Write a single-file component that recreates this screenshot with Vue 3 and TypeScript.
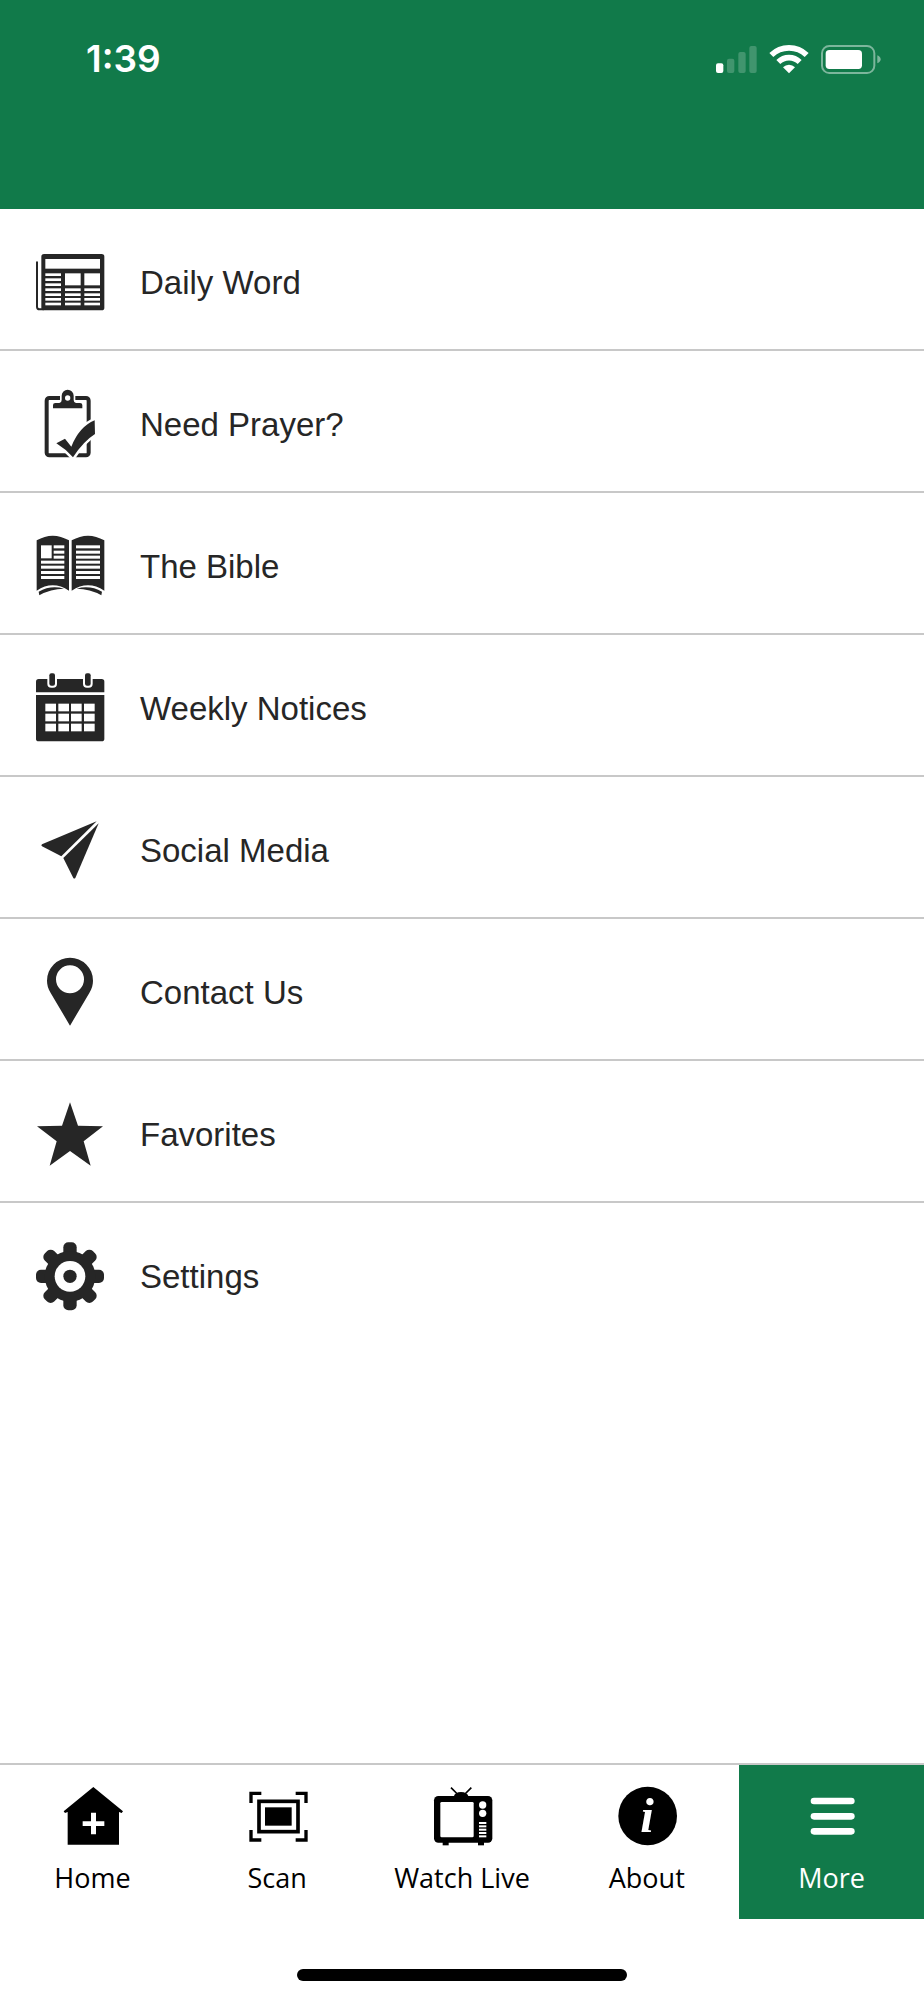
<script setup lang="ts">
import { ref } from 'vue'

interface Entry {
  id: string
  label: string
  viewBox: string
  art: string
}

const rects = (xs: number[], ys: number[], w: number, h: number): string =>
  ys.map((y) => xs.map((x) => `<rect x="${x}" y="${y}" width="${w}" height="${h}"/>`).join('')).join('')

const gearTeeth = [0, 45, 90, 135]
  .map((a) => `<rect x="130" y="487" width="40" height="204" rx="15" transform="rotate(${a} 150 589)"/>`)
  .join('')

const menu: Entry[] = [
  {
    id: 'daily-word',
    label: 'Daily Word',
    viewBox: '48 51 204 204',
    art: `<path d="M51 94V227Q51 235 59 235H70" fill="none" stroke="currentColor" stroke-width="6" stroke-linecap="round"/>
      <rect x="64" y="69" width="189" height="169" rx="8"/>
      <g fill="#fff"><rect x="76" y="84" width="164" height="29"/>
      ${rects([76], [127, 142, 157], 47, 8)}${rects([135, 193], [127], 47, 36)}
      ${rects([76, 135, 193], [172, 187, 201, 215], 47, 8)}</g>`,
  },
  {
    id: 'need-prayer',
    label: 'Need Prayer?',
    viewBox: '48 58 204 204',
    art: `<rect x="80" y="82" width="126" height="172" rx="8" fill="none" stroke="currentColor" stroke-width="12"/>
      <path d="M99 113V103Q99 97 106 97H118Q125 96 125 88V75A18 18 0 0 1 161 75V88Q161 96 168 97H180Q187 97 187 103V113Z" stroke="#fff" stroke-width="10" paint-order="stroke"/>
      <circle cx="143" cy="82" r="8" fill="#fff"/>
      <path d="M109 218L135 204L154 228Q178 168 224 149L225 190Q190 212 159 260Q137 235 109 218Z" stroke="#fff" stroke-width="15" paint-order="stroke"/>`,
  },
  {
    id: 'bible',
    label: 'The Bible',
    viewBox: '48 49 204 204',
    art: `<path d="M50 74Q98 46 147 74V225Q98 193 50 225Z"/><path d="M155 74Q204 46 253 74V225Q204 193 155 225Z"/>
      <path d="M56 228Q92 208 132 219Q92 219 58 239Z"/><path d="M246 228Q210 208 170 219Q210 219 244 239Z"/>
      <g fill="#fff"><rect x="63" y="89" width="32" height="39"/>
      ${rects([101], [89, 105, 120], 32, 9)}${rects([63], [135, 150, 166, 181], 70, 9)}
      ${rects([168], [89, 105, 120, 135, 150, 166, 181], 72, 9)}</g>`,
  },
  {
    id: 'weekly-notices',
    label: 'Weekly Notices',
    viewBox: '48 56 204 204',
    art: `<path d="M48 111V79Q48 71 56 71H245Q253 71 253 79V111Z"/><path d="M48 119H253V250Q253 258 245 258H56Q48 258 48 250Z"/>
      <g stroke="#fff" stroke-width="12" paint-order="stroke"><rect x="88" y="54" width="17" height="37" rx="6"/><rect x="195" y="54" width="17" height="37" rx="6"/></g>
      <g fill="#fff">${rects([76, 115, 153, 192], [145, 175, 205], 32, 23)}</g>`,
  },
  {
    id: 'social-media',
    label: 'Social Media',
    viewBox: '48 47 204 204',
    art: `<path d="M230 63L66 132Q62 135 66 138L124 168Z"/><path d="M236 69L130 173L160 233Q163 236 166 233Z"/>`,
  },
  {
    id: 'contact-us',
    label: 'Contact Us',
    viewBox: '48 53 204 204',
    art: `<path fill-rule="evenodd" d="M150 256L92 158C84 145 81 132 81 121A69 69 0 0 1 219 121C219 132 216 145 208 158ZM192 117A42 42 0 1 0 108 117A42 42 0 1 0 192 117Z"/>`,
  },
  {
    id: 'favorites',
    label: 'Favorites',
    viewBox: '48 60 204 204',
    art: `<path d="M150 67L174 137L249 139L191 184L212 257L150 213L89 257L110 184L51 139L126 137Z"/>`,
  },
  {
    id: 'settings',
    label: 'Settings',
    viewBox: '48 486 204 204',
    art: `${gearTeeth}<circle cx="150" cy="589" r="76"/><circle cx="150" cy="589" r="46" fill="#fff"/><circle cx="150" cy="589" r="20"/>`,
  },
]

const tabs: Entry[] = [
  {
    id: 'home',
    label: 'Home',
    viewBox: '187 108 180 180',
    art: `<path d="M281 111L370 184L366 189L358 186V284H204V186L196 189L192 184Z"/>
      <path fill="#fff" d="M274 188H289V214H314V228H289V253H274V228H249V214H274Z"/>`,
  },
  {
    id: 'scan',
    label: 'Scan',
    viewBox: '742 108 180 180',
    art: `<path fill="none" stroke="currentColor" stroke-width="10" d="M785 130H754V159M888 130H919V159M785 270H754V240M888 270H919V240"/>
      <rect x="778" y="154" width="117" height="91" fill="none" stroke="currentColor" stroke-width="11"/>
      <rect x="796" y="172" width="80" height="55"/>`,
  },
  {
    id: 'watch-live',
    label: 'Watch Live',
    viewBox: '276 108 180 180',
    art: `<path d="M333 113L352 132M394 113L375 132" stroke="currentColor" stroke-width="5"/>
      <path d="M341 140Q345 126 363 126T386 140Z"/><rect x="282" y="138" width="175" height="140" rx="13"/>
      <rect x="308" y="276" width="18" height="10"/><rect x="414" y="276" width="18" height="10"/>
      <g fill="#fff"><rect x="301" y="156" width="100" height="106" rx="4"/><circle cx="428" cy="165" r="11"/><circle cx="428" cy="190" r="11"/>
      ${rects([417], [216, 226, 236, 246, 256], 22, 6)}</g>`,
  },
  {
    id: 'about',
    label: 'About',
    viewBox: '831 108 180 180',
    art: `<circle cx="923" cy="198" r="88"/>
      <text x="921" y="247" text-anchor="middle" fill="#fff" font-family="'Liberation Serif', serif" font-size="146" font-weight="700" font-style="italic">i</text>`,
  },
  {
    id: 'more',
    label: 'More',
    viewBox: '487 108 180 180',
    art: `<rect x="513" y="143" width="132" height="20" rx="10"/><rect x="513" y="189" width="132" height="20" rx="10"/><rect x="513" y="234" width="132" height="20" rx="10"/>`,
  },
]

const active = ref('more')
</script>

<template>
  <div class="screen">
    <header class="header">
      <div class="status">
        <time class="clock">1:39</time>
        <div class="indicators">
          <svg class="signal" viewBox="48 42 123 87" role="img" aria-label="Signal strength">
            <rect x="48" y="97" width="22" height="29" rx="6" />
            <g opacity="0.2">
              <rect x="81" y="83" width="22" height="43" rx="6" />
              <rect x="115" y="63" width="22" height="63" rx="6" />
              <rect x="148" y="45" width="22" height="81" rx="6" />
            </g>
          </svg>
          <svg class="wifi" viewBox="207 42 120 87" role="img" aria-label="Wi-Fi">
            <g fill="none" stroke="currentColor" stroke-width="17">
              <path d="M214 72A76 76 0 0 1 320 72" />
              <path d="M235 93A46 46 0 0 1 299 93" />
            </g>
            <path d="M267 127L249 109A25 25 0 0 1 285 109Z" />
          </svg>
          <svg class="battery" viewBox="363 42 180 87" role="img" aria-label="Battery">
            <g opacity="0.45">
              <rect x="366" y="45" width="157" height="81" rx="22" fill="none" stroke="currentColor" stroke-width="6" />
              <path d="M532 73Q542 77 542 85T532 97Z" />
            </g>
            <rect x="377" y="57" width="109" height="57" rx="11" />
          </svg>
        </div>
      </div>
    </header>

    <main class="content">
      <ul class="menu">
        <li v-for="item in menu" :key="item.id" class="menu-item">
          <a class="menu-link" :href="`#${item.id}`">
            <svg class="menu-icon" :viewBox="item.viewBox" aria-hidden="true" v-html="item.art"></svg>
            <span class="menu-label">{{ item.label }}</span>
          </a>
        </li>
      </ul>
    </main>

    <nav class="tabs" aria-label="Main">
      <button
        v-for="tab in tabs"
        :key="tab.id"
        type="button"
        class="tab"
        :class="{ active: active === tab.id }"
        :aria-current="active === tab.id ? 'page' : undefined"
        @click="active = tab.id"
      >
        <svg class="tab-icon" :viewBox="tab.viewBox" aria-hidden="true" v-html="tab.art"></svg>
        <span>{{ tab.label }}</span>
      </button>
    </nav>
    <footer class="home-area">
      <div class="home-indicator"></div>
    </footer>
  </div>
</template>

<style>
body {
  margin: 0;
  background: #fff;
}
</style>

<style scoped>
.screen {
  display: flex;
  flex-direction: column;
  min-height: 100vh;
  background: #fff;
  color: #262626;
  font-family: 'Liberation Sans', Arial, sans-serif;
}

svg {
  display: block;
  flex: none;
  fill: currentColor;
  overflow: visible;
}

.header {
  min-height: 209px;
  background: #117a4a;
  color: #fff;
}

.status {
  display: flex;
  align-items: center;
  justify-content: space-between;
  height: 118px;
  padding: 0 43px 0 86px;
}

.clock {
  font: 600 37px/44px Inter, sans-serif;
}

.indicators {
  display: flex;
  gap: 12px;
}

.signal {
  width: 41px;
  height: 29px;
}

.wifi {
  width: 40px;
  height: 29px;
}

.battery {
  width: 60px;
  height: 29px;
}

.content {
  flex: 1;
}

.menu {
  margin: 0;
  padding: 0;
  list-style: none;
}

.menu-item {
  border-bottom: 2px solid #c8c8c8;
}

.menu-item:last-child {
  border-bottom: 0;
}

.menu-link {
  display: flex;
  align-items: center;
  gap: 36px;
  padding: 39px 36px 33px;
  color: inherit;
  font-size: 33px;
  line-height: 40px;
  text-decoration: none;
}

.menu-label {
  padding-top: 2px;
}

.menu-icon {
  width: 68px;
  height: 68px;
}

.tabs {
  display: grid;
  grid-template-columns: repeat(5, 1fr);
  border-top: 2px solid #c8c8c8;
}

.tab {
  display: flex;
  flex-direction: column;
  align-items: center;
  gap: 12px;
  margin: 0;
  padding: 21px 0;
  border: 0;
  background: none;
  color: #000;
  font: 400 27px/40px 'Open Sans', sans-serif;
  cursor: pointer;
}

.tab.active {
  background: #117a4a;
  color: #fff;
}

.tab-icon {
  width: 60px;
  height: 60px;
}

.home-area {
  display: flex;
  justify-content: center;
  padding: 50px 0 19px;
}

.home-indicator {
  width: 330px;
  height: 12px;
  border-radius: 6px;
  background: #000;
}
</style>
